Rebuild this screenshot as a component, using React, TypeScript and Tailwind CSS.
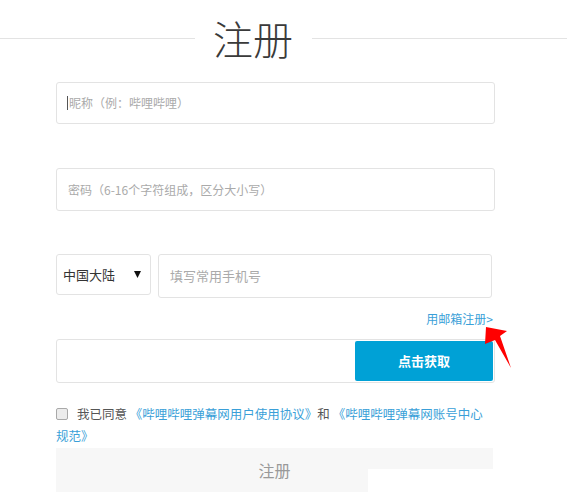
const FONT = "font-['Microsoft_YaHei','Noto_Sans_CJK_SC',sans-serif]";

function RedArrow() {
  return (
    <svg
      className="pointer-events-none absolute left-[480px] top-[322px]"
      width="36"
      height="52"
      viewBox="480 322 36 52"
    >
      <polygon
        points="486,327 507,331 500,336 511,368 495,340 485,344"
        fill="#ff0000"
      />
    </svg>
  );
}

export default function App() {
  return (
    <div className={`relative h-[500px] w-[567px] overflow-hidden bg-white ${FONT}`}>
      {/* heading with rule */}
      <div className="flex h-[76px] items-center">
        <div className="h-px w-[195px] bg-[#e3e3e3]" />
        <h1 className="pl-[18px] pr-[19px] text-[40px] font-light leading-none text-[#3a3a3a] -mt-px">注册</h1>
        <div className="h-px flex-1 bg-[#e3e3e3]" />
      </div>

      <div className="ml-[56px] w-[439px]">
        {/* nickname */}
        <div className="mt-[6px] flex h-[42px] items-center rounded-[3px] border border-[#e3e3e3] px-[10px] text-[12px] text-[#aaa]">
          <span className="mr-px h-[14px] w-px bg-[#555]" />
          昵称（例：哔哩哔哩）
        </div>

        {/* password */}
        <div className="mt-[44px] flex h-[43px] items-center rounded-[3px] border border-[#e3e3e3] px-[11px] text-[12px] text-[#aaa]">
          密码（6-16个字符组成，区分大小写）
        </div>

        {/* phone row */}
        <div className="mt-[43px] flex items-start gap-[7px]">
          <div className="flex h-[41px] w-[95px] items-center justify-between rounded-[3px] border border-[#e3e3e3] pl-[6px] pr-[9px] text-[13px] text-[#333]">
            <span>中国大陆</span>
            <svg width="7" height="7" viewBox="0 0 7 7">
              <polygon points="0,0 7,0 3.5,7" fill="#111" />
            </svg>
          </div>
          <div className="flex h-[44px] w-[334px] items-center rounded-[3px] border border-[#e3e3e3] px-[11px] text-[13px] text-[#aaa]">
            填写常用手机号
          </div>
        </div>

        <div className="mt-[14px] flex justify-end pr-[2px] text-[12px] leading-[14px] text-[#3a9fd8]">
          用邮箱注册&gt;
        </div>

        {/* verification code */}
        <div className="mt-[13px] flex h-[44px] items-center justify-end rounded-[3px] border border-[#e3e3e3] pr-px">
          <button className="flex h-[40px] w-[138px] items-center justify-center rounded-[2px] bg-[#00a1d6] text-[13px] font-bold text-white">
            点击获取
          </button>
        </div>

        {/* agreement */}
        <p className="mt-[20px] text-[12.5px] leading-[22px] text-[#555]">
          <span className="mr-[9px] inline-block h-[12px] w-[12px] rounded-[2px] border border-[#a9a9a9] bg-[#ececec] align-[-1px]" />
          我已同意 <a className="text-[#3a9fd8]">《哔哩哔哩弹幕网用户使用协议》</a>和 <a className="text-[#3a9fd8]">《哔哩哔哩弹幕网账号中心<br />规范》</a>
        </p>

        {/* submit */}
        <div className="mt-[1px] flex h-[44px] w-[437px] items-center justify-center bg-[#f7f7f7] text-[16px] text-[#999]">
          注册
        </div>
      </div>

      {/* screenshot crop artifact */}
      <div className="absolute left-[368px] top-[469px] h-[31px] w-[199px] bg-white" />
      <RedArrow />
    </div>
  );
}
